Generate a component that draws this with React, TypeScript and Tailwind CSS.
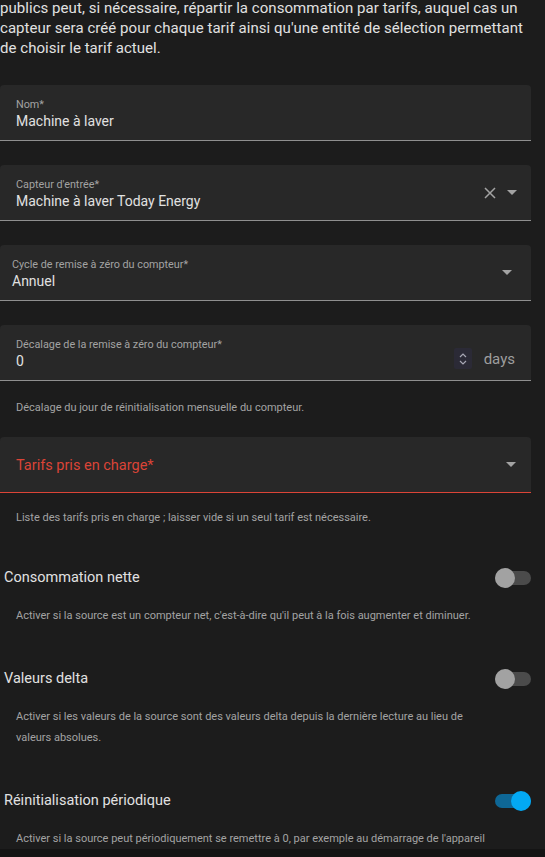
import React from "react";

const font = { fontFamily: "Roboto, 'Noto Sans', sans-serif" };

function Caret() {
  return (
    <svg width="10" height="5" viewBox="0 0 10 5" className="shrink-0">
      <path d="M0 0 L10 0 L5 5 Z" fill="#a3a3a3" />
    </svg>
  );
}

function CloseIcon() {
  return (
    <svg width="12" height="12" viewBox="0 0 12 12" className="shrink-0">
      <path d="M1 1 L11 11 M11 1 L1 11" stroke="#a3a3a3" strokeWidth="1.5" />
    </svg>
  );
}

function Spinner() {
  return (
    <div className="flex h-[21px] w-[18px] items-center justify-center rounded-[2px] bg-[#2b2a36]">
      <svg width="8" height="12" viewBox="0 0 8 12">
        <path d="M1 4 L4 1 L7 4 M1 8 L4 11 L7 8" stroke="#a7a7b4" strokeWidth="1.2" fill="none" />
      </svg>
    </div>
  );
}

function Switch({ on }: { on: boolean }) {
  return (
    <div className="relative h-[20px] w-[36px] shrink-0">
      <div
        className={
          "absolute left-0 top-[3px] h-[14px] w-[36px] rounded-full " +
          (on ? "bg-[#0e6796]" : "bg-[#4b4b4b]")
        }
      />
      <div
        className={
          "absolute top-0 h-[20px] w-[20px] rounded-full " +
          (on ? "left-[16px] bg-[#03a9f4]" : "left-0 bg-[#a2a2a2]")
        }
      />
    </div>
  );
}

export default function App() {
  return (
    <div className="h-[857px] w-full overflow-hidden bg-[#1c1c1c]" style={font}>
      <div className="flex h-[849px] flex-col pr-[14px]">
        <p className="mt-[-2px] text-[15px] leading-[20px] tracking-[0.05px] text-[#e1e1e1]">
          publics peut, si nécessaire, répartir la consommation par tarifs, auquel cas un capteur sera créé pour
          chaque tarif ainsi qu'une entité de sélection permettant de choisir le tarif actuel.
        </p>

        {/* Nom */}
        <div className="mt-[27px] flex h-[56px] flex-col rounded-t-[4px] border-b border-[#8f8f8f] bg-[#282828] px-4 pt-[12px]">
          <span className="text-[10.8px] leading-[16px] text-[#a3a3a3]">Nom*</span>
          <span className="text-[14px] leading-[16px] text-[#e1e1e1]">Machine à laver</span>
        </div>

        {/* Capteur */}
        <div className="mt-[24px] flex h-[56px] items-center rounded-t-[4px] border-b border-[#8f8f8f] bg-[#282828] pl-4 pr-[14px]">
          <div className="flex flex-1 flex-col self-start pt-[12px]">
            <span className="text-[10.8px] leading-[16px] text-[#a3a3a3]">Capteur d'entrée*</span>
            <span className="text-[14px] leading-[16px] text-[#e1e1e1]">Machine à laver Today Energy</span>
          </div>
          <div className="flex items-center gap-[11px]">
            <CloseIcon />
            <Caret />
          </div>
        </div>

        {/* Cycle */}
        <div className="mt-[24px] flex h-[56px] items-center rounded-t-[4px] border-b border-[#8f8f8f] bg-[#282828] pl-3 pr-[19px]">
          <div className="flex flex-1 flex-col self-start pt-[12px]">
            <span className="text-[10.8px] leading-[16px] text-[#a3a3a3]">Cycle de remise à zéro du compteur*</span>
            <span className="text-[14px] leading-[16px] text-[#e1e1e1]">Annuel</span>
          </div>
          <Caret />
        </div>

        {/* Décalage */}
        <div className="mt-[24px] flex h-[56px] items-center rounded-t-[4px] border-b border-[#8f8f8f] bg-[#282828] pl-4 pr-[16px]">
          <div className="flex flex-1 flex-col self-start pt-[12px]">
            <span className="text-[10.8px] leading-[16px] text-[#a3a3a3]">Décalage de la remise à zéro du compteur*</span>
            <span className="text-[14px] leading-[16px] text-[#e1e1e1]">0</span>
          </div>
          <div className="flex items-center gap-[12px] pt-[12px]">
            <Spinner />
            <span className="text-[15px] leading-[20px] text-[#9e9e9e]">days</span>
          </div>
        </div>
        <p className="mt-4 px-4 text-[11px] leading-[21px] text-[#a3a3a3]">
          Décalage du jour de réinitialisation mensuelle du compteur.
        </p>

        {/* Tarifs */}
        <div className="mt-[19px] flex h-[56px] items-center rounded-t-[4px] border-b border-[#db4437] bg-[#282828] pl-4 pr-[15px]">
          <span className="flex-1 pt-[3px] text-[14.5px] text-[#db4437]">Tarifs pris en charge*</span>
          <Caret />
        </div>
        <p className="mt-[14px] px-4 text-[11px] leading-[21px] text-[#a3a3a3]">
          Liste des tarifs pris en charge ; laisser vide si un seul tarif est nécessaire.
        </p>

        {/* Switches */}
        <div className="mt-[30px] flex h-[40px] items-center justify-between pl-1">
          <span className="text-[14.5px] text-[#e1e1e1]">Consommation nette</span>
          <Switch on={false} />
        </div>
        <p className="mt-[7px] px-4 text-[11px] leading-[21px] text-[#a3a3a3]">
          Activer si la source est un compteur net, c'est-à-dire qu'il peut à la fois augmenter et diminuer.
        </p>

        <div className="mt-[33px] flex h-[40px] items-center justify-between pl-1">
          <span className="text-[14.5px] text-[#e1e1e1]">Valeurs delta</span>
          <Switch on={false} />
        </div>
        <p className="mt-[7px] pl-4 pr-[40px] text-[11px] leading-[21px] text-[#a3a3a3]">
          Activer si les valeurs de la source sont des valeurs delta depuis la dernière lecture au lieu de valeurs
          absolues.
        </p>

        <div className="mt-[33px] flex h-[40px] items-center justify-between pl-1">
          <span className="text-[14.5px] text-[#e1e1e1]">Réinitialisation périodique</span>
          <Switch on={true} />
        </div>
        <p className="mt-[7px] whitespace-nowrap px-4 text-[11px] leading-[21px] text-[#a3a3a3]">
          Activer si la source peut périodiquement se remettre à 0, par exemple au démarrage de l'appareil
        </p>
      </div>
      <div className="h-[8px] bg-[#141414]" />
    </div>
  );
}
